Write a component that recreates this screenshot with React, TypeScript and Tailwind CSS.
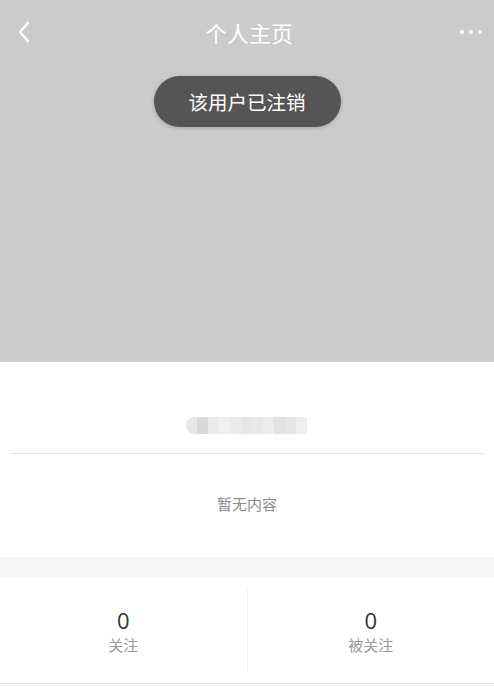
import React from "react";

const blocks = [
  "#e6e6e6", "#d8d8d8", "#ebebeb", "#f0f0f0", "#ebebeb", "#e6e6e6", "#e8e8e8", "#ececec", "#e2e2e2", "#e6e6e6", "#efefef",
];

export default function App() {
  return (
    <div
      className="w-[494px] h-[686px] bg-white flex flex-col overflow-hidden"
      style={{ fontFamily: '"Noto Sans CJK SC", "Noto Sans", sans-serif' }}
    >
      {/* Gray header area */}
      <div className="h-[362px] bg-[#cbcbcb] flex flex-col">
        <div className="h-[64px] flex items-center justify-between px-[16px]">
          <svg width="16" height="24" viewBox="0 0 16 24">
            <path d="M12 3 L4 12 L12 21" stroke="white" strokeWidth="2.6" fill="none" strokeLinecap="round" strokeLinejoin="round" />
          </svg>
          <div className="text-white text-[22px] leading-none ml-[6px]">个人主页</div>
          <div className="flex gap-[5px] items-center mr-[-4px]">
            <span className="w-[4px] h-[4px] rounded-full bg-white" />
            <span className="w-[4px] h-[4px] rounded-full bg-white" />
            <span className="w-[4px] h-[4px] rounded-full bg-white" />
          </div>
        </div>
        <div className="flex justify-center mt-[12px]">
          <div className="w-[187px] h-[51px] rounded-full bg-[#555555] text-white text-[19.5px] flex items-center justify-center shadow-[0_1px_4px_rgba(0,0,0,0.2)]">
            该用户已注销
          </div>
        </div>
      </div>

      {/* White profile area */}
      <div className="h-[195px] bg-white flex flex-col">
        <div className="h-[91px] flex items-center justify-center">
          <div className="flex h-[17px] mt-[36px] ml-[-2px]">
            {blocks.map((c, i) => (
              <span key={i} className="w-[11px] h-[17px] first:rounded-l-full" style={{ backgroundColor: c }} />
            ))}
          </div>
        </div>
        <div className="mx-[10px] h-[1px] bg-[#e2e2e2]" />
        <div className="flex-1 flex items-center justify-center text-[15px] text-[#8a8a8a] pb-[2px]">
          暂无内容
        </div>
      </div>

      {/* Gray band */}
      <div className="h-[21px] bg-[#f6f6f6]" />

      {/* Stats */}
      <div className="h-[106px] flex border-b border-[#e6e6e6]">
        <div className="flex-1 flex flex-col items-center justify-center">
          <div className="text-[22px] leading-[26px] text-[#333333]" style={{ fontFamily: '"Open Sans", sans-serif' }}>0</div>
          <div className="text-[15px] leading-[20px] text-[#999999] mt-[2px]">关注</div>
        </div>
        <div className="w-[1px] my-[12px] bg-[#f0f0f0]" />
        <div className="flex-1 flex flex-col items-center justify-center">
          <div className="text-[22px] leading-[26px] text-[#333333]" style={{ fontFamily: '"Open Sans", sans-serif' }}>0</div>
          <div className="text-[15px] leading-[20px] text-[#999999] mt-[2px]">被关注</div>
        </div>
      </div>
    </div>
  );
}
